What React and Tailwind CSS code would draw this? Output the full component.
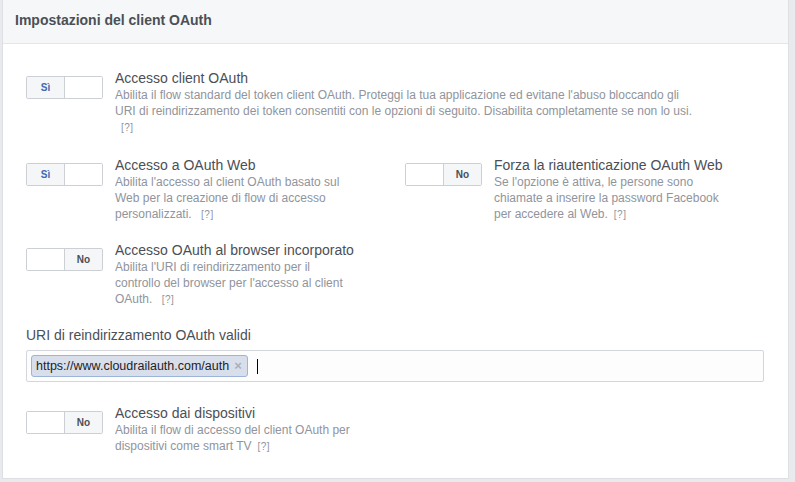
import React from "react";

function Toggle({ on }) {
  return (
    <div className="flex h-[23px] w-[77px] shrink-0 overflow-hidden rounded-[2px] border border-[#ccd0d5] bg-white">
      {on ? (
        <>
          <div className="flex w-[38px] items-center justify-center border-r border-[#ccd0d5] bg-[#f5f6f7] text-[10px] font-bold text-[#4267b2]">Sì</div>
          <div className="flex-1 bg-white" />
        </>
      ) : (
        <>
          <div className="flex-1 bg-white" />
          <div className="flex w-[38px] items-center justify-center border-l border-[#ccd0d5] bg-[#f5f6f7] text-[10px] font-bold text-[#4b4f56]">No</div>
        </>
      )}
    </div>
  );
}

function Q() {
  return <span className="ml-[6px] inline-block text-[10px] leading-[16px] tracking-[0.5px] text-[#90949c]">[?]</span>;
}

function Setting({ on, title, desc, descW }) {
  return (
    <div className="flex">
      <div className="pt-[7px]">
        <Toggle on={on} />
      </div>
      <div className="ml-[12px]">
        <div className="text-[14px] leading-[18px] text-[#4b4f56]">{title}</div>
        <div className={`${descW} text-[12px] leading-[16px] text-[#90949c]`}>
          {desc}
          <Q />
        </div>
      </div>
    </div>
  );
}

export default function App() {
  return (
    <div className="min-h-[482px] w-[795px] bg-[#e9eaed] pl-[2px] pb-[5px]" style={{ fontFamily: '"Liberation Sans", Arial, sans-serif' }}>
      <div className="w-[787px] border-x border-b border-[#dddfe2] bg-white">
        <div className="flex h-[44px] items-center border-b border-[#e5e6e9] bg-[#f6f7f9] pl-[12px] pb-[2px]">
          <span className="text-[14px] font-bold text-[#4b4f56]">Impostazioni del client OAuth</span>
        </div>
        <div className="pl-[23px] pr-[24px] pt-[25px] pb-[23px]">
          <Setting
            on
            title="Accesso client OAuth"
            descW="w-[585px]"
            desc="Abilita il flow standard del token client OAuth. Proteggi la tua applicazione ed evitane l'abuso bloccando gli URI di reindirizzamento dei token consentiti con le opzioni di seguito. Disabilita completamente se non lo usi. "
          />
          <div className="mt-[20px] flex">
            <div className="w-[379px]">
              <Setting
                on
                title="Accesso a OAuth Web"
                descW="w-[240px]"
                desc="Abilita l'accesso al client OAuth basato sul Web per la creazione di flow di accesso personalizzati. "
              />
            </div>
            <Setting
              on={false}
              title="Forza la riautenticazione OAuth Web"
              descW="w-[240px]"
              desc="Se l'opzione è attiva, le persone sono chiamate a inserire la password Facebook per accedere al Web."
            />
          </div>
          <div className="mt-[18px]">
            <Setting
              on={false}
              title="Accesso OAuth al browser incorporato"
              descW="w-[240px]"
              desc="Abilita l'URI di reindirizzamento per il controllo del browser per l'accesso al client OAuth. "
            />
          </div>
          <div className="mt-[18px] text-[14px] leading-[18px] text-[#4b4f56]">URI di reindirizzamento OAuth validi</div>
          <div className="mt-[6px] flex h-[32px] w-[738px] items-center rounded-[2px] border border-[#d3d6db] bg-[#fdfdfd] pl-[4px]">
            <div className="flex h-[22px] items-center rounded-[3px] border border-[#9cb4d8] bg-[#d8dfea] pl-[4px] pr-[5px] text-[12.5px] text-[#1d2129]">
              https://www.cloudrailauth.com/auth
              <span className="ml-[5px] text-[13px] font-bold text-[#a7b0bd]">×</span>
            </div>
            <div className="ml-[9px] h-[15px] w-px bg-black" />
          </div>
          <div className="mt-[22px]">
            <Setting
              on={false}
              title="Accesso dai dispositivi"
              descW="w-[240px]"
              desc="Abilita il flow di accesso del client OAuth per dispositivi come smart TV"
            />
          </div>
        </div>
      </div>
    </div>
  );
}
